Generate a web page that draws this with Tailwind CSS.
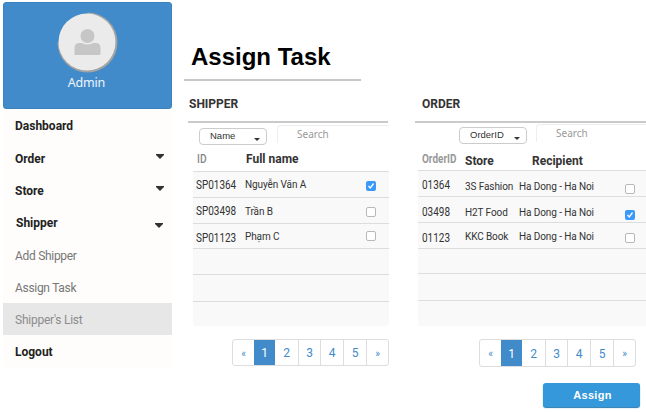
<!DOCTYPE html>
<html lang="en">
<head>
<meta charset="utf-8">
<title>Assign Task</title>
<script src="https://cdn.jsdelivr.net/npm/@tailwindcss/browser@4"></script>
</head>
<body class="flex h-[412px] w-[646px] overflow-hidden bg-white font-[Roboto,'Noto_Sans',sans-serif] text-[#333]">
<aside class="ml-[3px] mt-[2px] w-[169px] shrink-0">
  <div class="flex h-[107px] flex-col items-center rounded-[3px] border border-[#3c82bf] bg-[#428bca] pt-[9px]">
    <svg class="h-[61px] w-[61px]" viewBox="0 0 61 61">
      <path d="M30.500 0.500A30 30 0 1 1 .5 30.500H30.500Z" fill="#a3a3a3"/>
      <circle cx="30" cy="30" r="28.500" fill="#ebebeb"/>
      <circle cx="30.500" cy="24" r="7" fill="#c6c6c6"/>
      <path d="M17.500 43V36Q17.500 31 22.500 31H25Q30.500 34 36 31H38.500Q43.500 31 43.500 36V41.500Q43.500 43 42 43Z" fill="#c6c6c6"/>
    </svg>
    <div class="mt-px pr-[2px] font-['Noto_Sans'] text-[12.500px] leading-[18px] tracking-[-0.2px] text-[#eef5fb]">Admin</div>
  </div>
  <nav class="mt-px h-[258px] rounded-b-[3px] bg-[#fefdfb] text-[12px] font-bold text-[#222]">
    <div class="flex h-[32px] items-center pl-3"><span>Dashboard</span></div>
    <div class="flex h-[32px] items-center justify-between pl-3 pr-2"><span class="pt-px">Order</span><svg class="mb-[3px] h-[5px] w-2" viewBox="0 0 8 5"><path d="M0 0H8V1L4 5L0 1Z" fill="#333"/></svg></div>
    <div class="flex h-[32px] items-center justify-between pl-3 pr-2"><span class="pt-px">Store</span><svg class="mb-[3px] h-[5px] w-2" viewBox="0 0 8 5"><path d="M0 0H8V1L4 5L0 1Z" fill="#333"/></svg></div>
    <div class="flex h-[33px] items-center justify-between pl-[13px] pr-[9px]"><span>Shipper</span><svg class="mt-[5px] h-[5px] w-2" viewBox="0 0 8 5"><path d="M0 0H8V1L4 5L0 1Z" fill="#333"/></svg></div>
    <div class="flex h-[32px] items-center pl-3 pt-px font-normal text-[#777]"><span class="tracking-[-0.300px]">Add Shipper</span></div>
    <div class="flex h-[32px] items-center pl-3 pt-px font-normal text-[#777]"><span class="tracking-[-0.300px]">Assign Task</span></div>
    <div class="flex h-[32px] items-center bg-[#e7e7e7] pl-3 pt-px font-normal text-[#8c8c8c]"><span class="tracking-[-0.250px]">Shipper's List</span></div>
    <div class="flex h-[33px] items-center pl-3"><span>Logout</span></div>
  </nav>
</aside>
<main class="ml-[12px] w-[462px] shrink-0">
  <h1 class="h-[81px] w-[177px] whitespace-nowrap border-b-2 border-[#c8c8c8] pl-[7px] pt-[42px] font-['Liberation_Sans'] text-[24px] font-bold leading-[29px] text-black">Assign Task</h1>
  <div class="flex">
    <section class="ml-[4px] w-[203px]">
      <h2 class="h-[42px] w-[200px] border-b-2 border-[#cacaca] pl-px pt-[15px] text-[12px] font-bold leading-4">SHIPPER</h2>
      <div class="ml-[5px] w-[196px]">
        <div class="flex h-[25px] pl-[6px]">
          <div class="mt-[5px] flex h-[17px] w-[68px] items-center rounded-[4px] border border-[#ccc] bg-white pl-[10px] pr-[6px] font-['Liberation_Sans'] text-[9.500px]"><span>Name</span><svg class="ml-auto mt-[5px] h-[3px] w-[6px]" viewBox="0 0 6 3"><path d="M0 0H6L3 3Z" fill="#333"/></svg></div>
          <div class="ml-[10px] mt-[2px] h-[18px] flex-1 rounded-tl-[4px] border-l border-t border-[#eee] pl-[19px] font-['Noto_Sans'] text-[10px] leading-[17px] text-[#999]">Search</div>
        </div>
        <div class="flex h-[23px] items-center pb-[2px] pl-1 text-[12px] font-bold"><span class="w-[49px] origin-left scale-x-[0.85] pt-px font-medium text-[#888]">ID</span><span>Full name</span></div>
        <div class="overflow-hidden rounded-b-[3px] bg-[#f9f9f9] text-[10px]">
          <div class="flex h-[26px] items-center border-t border-[#ddd] pl-[3px]"><span class="w-[49px] origin-left scale-x-[0.83] pt-px text-[12px]">SP01364</span><span class="tracking-[-0.1px]">Nguyễn Văn A</span><svg class="ml-auto mr-[13px] mt-[3px] h-[10px] w-[10px]" viewBox="0 0 10 10"><rect width="10" height="10" rx="2" fill="#3b99fc"/><path d="M2.500 5L4.300 7L7.500 2.500" fill="none" stroke="#fff" stroke-width="1.300"/></svg></div>
          <div class="flex h-[26px] items-center border-t border-[#ddd] pl-[3px]"><span class="w-[49px] origin-left scale-x-[0.83] pt-px text-[12px]">SP03498</span><span class="pt-px tracking-[-0.1px]">Trần B</span><span class="ml-auto mr-[13px] mt-[2px] h-[10px] w-[10px] rounded-[2px] border border-[#b8b8b8] bg-white"></span></div>
          <div class="flex h-[25px] items-center border-t border-[#ddd] pl-[3px]"><span class="w-[49px] origin-left scale-x-[0.83] pt-[3px] text-[12px]">SP01123</span><span class="pt-px tracking-[-0.1px]">Phạm C</span><span class="ml-auto mr-[13px] h-[10px] w-[10px] rounded-[2px] border border-[#b8b8b8] bg-white"></span></div>
          <div class="h-[26px] border-t border-[#ddd]"></div>
          <div class="h-[27px] border-t border-[#ddd]"></div>
          <div class="h-[25px] border-t border-[#ddd]"></div>
        </div>
        <div class="ml-[39px] mt-[13px] flex h-[27px] w-[157px] rounded-[3px] border border-[#ddd] text-center text-[12px] leading-[27px] text-[#428bca]">
          <span class="w-[21px] text-[10px]">«</span><span class="w-[21px] bg-[#428bca] text-white">1</span><span class="w-[23px]">2</span><span class="w-[22px] border-l border-[#ddd]">3</span><span class="w-[23px] border-l border-[#ddd]">4</span><span class="w-[23px] border-l border-[#ddd]">5</span><span class="flex-1 border-l border-[#ddd] text-[10px]">»</span>
        </div>
      </div>
    </section>
    <section class="ml-[24px] w-[231px]">
      <h2 class="h-[42px] border-b-2 border-[#cacaca] pl-[7px] pt-[15px] text-[12px] font-bold leading-4">ORDER</h2>
      <div class="ml-[3px] w-[228px]">
        <div class="flex h-[25px] pl-[41px]">
          <div class="mt-[4px] flex h-[17px] w-[68px] items-center rounded-[4px] border border-[#ccc] bg-white pl-[10px] pr-[6px] font-['Liberation_Sans'] text-[9.500px]"><span>OrderID</span><svg class="ml-auto mt-[5px] h-[3px] w-[6px]" viewBox="0 0 6 3"><path d="M0 0H6L3 3Z" fill="#333"/></svg></div>
          <div class="ml-[9px] mt-px h-[18px] flex-1 rounded-tl-[4px] border-l border-t border-[#eee] pl-[19px] font-['Noto_Sans'] text-[10px] leading-[17px] text-[#999]">Search</div>
        </div>
        <div class="flex h-[22px] items-center pl-1 text-[12px] font-bold"><span class="w-[43px] origin-left scale-x-[0.83] text-[#999]">OrderID</span><span class="w-[67px] pt-[3px]">Store</span><span class="pt-[3px]">Recipient</span></div>
        <div class="overflow-hidden rounded-bl-[3px] bg-[#f9f9f9] text-[10px]">
          <div class="flex h-[26px] items-center border-t border-[#ddd] pl-1"><span class="w-[43px] origin-left scale-x-[0.83] pt-[3px] text-[12px]">01364</span><span class="w-[54px] pt-[6px] tracking-[-0.1px]">3S Fashion</span><span class="pt-[6px] tracking-[-0.1px]">Ha Dong - Ha Noi</span><span class="ml-auto mr-[11px] mt-[11px] h-[10px] w-[10px] rounded-[2px] border border-[#b8b8b8] bg-white"></span></div>
          <div class="flex h-[26px] items-center border-t border-[#ddd] pl-1"><span class="w-[43px] origin-left scale-x-[0.83] pt-[5px] text-[12px]">03498</span><span class="w-[54px] pt-[5px] tracking-[-0.1px]">H2T Food</span><span class="pt-[5px] tracking-[-0.1px]">Ha Dong - Ha Noi</span><svg class="ml-auto mr-[11px] mt-[10px] h-[10px] w-[10px]" viewBox="0 0 10 10"><rect width="10" height="10" rx="2" fill="#3b99fc"/><path d="M2.500 5L4.300 7L7.500 2.500" fill="none" stroke="#fff" stroke-width="1.300"/></svg></div>
          <div class="flex h-[26px] items-center border-t border-[#ddd] pl-1"><span class="w-[43px] origin-left scale-x-[0.83] pt-[5px] text-[12px]">01123</span><span class="w-[54px] pt-px tracking-[-0.1px]">KKC Book</span><span class="pt-px tracking-[-0.1px]">Ha Dong - Ha Noi</span><span class="ml-auto mr-[11px] mt-[4px] h-[10px] w-[10px] rounded-[2px] border border-[#b8b8b8] bg-white"></span></div>
          <div class="h-[25px] border-t border-[#ddd]"></div>
          <div class="h-[27px] border-t border-[#ddd]"></div>
          <div class="h-[26px] border-t border-[#ddd]"></div>
        </div>
        <div class="ml-[61px] mt-[13px] flex h-[28px] w-[157px] rounded-[3px] border border-[#ddd] text-center text-[12px] leading-[28px] text-[#428bca]">
          <span class="w-[21px] text-[10px]">«</span><span class="w-[21px] bg-[#428bca] text-white">1</span><span class="w-[23px]">2</span><span class="w-[22px] border-l border-[#ddd]">3</span><span class="w-[23px] border-l border-[#ddd]">4</span><span class="w-[23px] border-l border-[#ddd]">5</span><span class="flex-1 border-l border-[#ddd] text-[10px]">»</span>
        </div>
        <button class="ml-[125px] mt-[16px] block h-[24px] w-[97px] rounded-[3px] bg-[#3498db] font-['Liberation_Sans'] text-[11px] font-bold leading-[24px] tracking-[0.3px] text-white shadow-[0_1px_1px_#2678b0]"><span class="pl-[2px]">Assign</span></button>
      </div>
    </section>
  </div>
</main>
</body>
</html>
